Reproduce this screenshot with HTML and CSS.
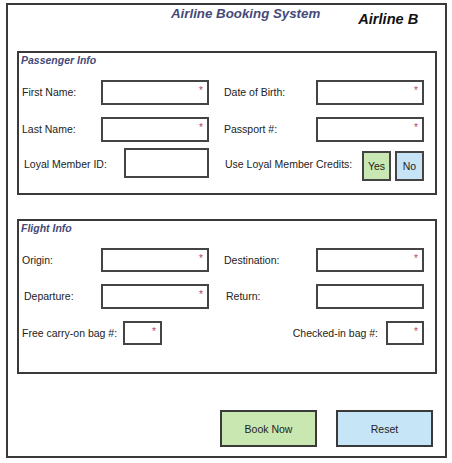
FILE: index.html
```html
<!DOCTYPE html>
<html>
<head>
<meta charset="utf-8">
<link rel="stylesheet" href="styles.css">
</head>
<body>
<div class="frame">
  <div class="header">
    <div class="title">Airline Booking System</div>
    <div class="brand">Airline B</div>
  </div>

  <div class="section passenger">
    <div class="legend">Passenger Info</div>
    <div class="row r1">
      <div class="label lw1">First Name:</div>
      <div class="field wide req"></div>
      <div class="label lw2">Date of Birth:</div>
      <div class="field wide req"></div>
    </div>
    <div class="row r2">
      <div class="label lw1">Last Name:</div>
      <div class="field wide req"></div>
      <div class="label lw2">Passport #:</div>
      <div class="field wide req"></div>
    </div>
    <div class="row r3">
      <div class="label lw3">Loyal Member ID:</div>
      <div class="field mid"></div>
      <div class="label lw4">Use Loyal Member Credits:</div>
      <div class="toggle yes">Yes</div>
      <div class="toggle no">No</div>
    </div>
  </div>

  <div class="section flight">
    <div class="legend">Flight Info</div>
    <div class="row r1 f1">
      <div class="label lw1">Origin:</div>
      <div class="field wide req"></div>
      <div class="label lw2">Destination:</div>
      <div class="field wide req"></div>
    </div>
    <div class="row r2">
      <div class="label lw1 shift">Departure:</div>
      <div class="field wide req"></div>
      <div class="label lw2 shift">Return:</div>
      <div class="field wide"></div>
    </div>
    <div class="row r4">
      <div class="label lw5">Free carry-on bag #:</div>
      <div class="field small req"></div>
      <div class="label right">Checked-in bag #:</div>
      <div class="field small2 req"></div>
    </div>
  </div>

  <div class="actions">
    <div class="btn book">Book Now</div>
    <div class="btn reset">Reset</div>
  </div>
</div>
</body>
</html>
```

FILE: styles.css
```css
html, body {
  margin: 0;
  padding: 0;
  background: #ffffff;
}

body {
  font-family: "Liberation Sans", Arial, sans-serif;
  color: #222222;
}

.frame {
  box-sizing: border-box;
  width: 441px;
  height: 455px;
  margin: 3px 0 0 6px;
  border: 2px solid #3a3a3a;
  display: flex;
  flex-direction: column;
}

.header {
  height: 46px;
  display: flex;
  align-items: flex-start;
}

.title {
  margin-left: 163px;
  margin-top: 1px;
  font-size: 13.3px;
  font-weight: bold;
  font-style: italic;
  color: #454a78;
  line-height: 15px;
}

.brand {
  margin-left: 38px;
  margin-top: 6px;
  font-size: 14.6px;
  font-weight: bold;
  font-style: italic;
  color: #111111;
  line-height: 17px;
}

.section {
  box-sizing: border-box;
  margin-left: 9px;
  width: 420px;
  border: 2px solid #3a3a3a;
}

.passenger {
  height: 144px;
}

.flight {
  height: 155px;
  margin-top: 24px;
}

.legend {
  padding-left: 2px;
  height: 14px;
  line-height: 14px;
  font-size: 10.5px;
  font-weight: bold;
  font-style: italic;
  color: #454a78;
}

.row {
  display: flex;
  align-items: center;
}

.r1 {
  margin-top: 13px;
  height: 25px;
}

.f1 {
  height: 24px;
}

.r2 {
  margin-top: 12px;
  height: 25px;
}

.r3 {
  margin-top: 6px;
  height: 33px;
  align-items: center;
}

.r4 {
  margin-top: 12px;
  height: 24px;
}

.label {
  box-sizing: border-box;
  font-size: 10.5px;
  line-height: 13px;
  color: #222222;
  white-space: nowrap;
}

.lw1 {
  width: 82px;
  padding-left: 3px;
}

.lw2 {
  width: 107px;
  padding-left: 15px;
}

.shift {
  padding-left: 5px;
}

.lw2.shift {
  padding-left: 17px;
}

.lw3 {
  width: 105px;
  padding-left: 5px;
}

.lw4 {
  width: 153px;
  padding-left: 16px;
}

.lw5 {
  width: 104px;
  padding-left: 3px;
}

.right {
  margin-left: auto;
  margin-right: 8px;
}

.field {
  box-sizing: border-box;
  position: relative;
  height: 100%;
  border: 2px solid #444444;
  background: #ffffff;
}

.wide {
  width: 108px;
}

.mid {
  width: 85px;
  height: 30px;
  align-self: flex-start;
}

.small {
  width: 39px;
}

.small2 {
  width: 38px;
  margin-right: 11px;
}

.req::after {
  content: "*";
  position: absolute;
  right: 4px;
  top: 4px;
  font-size: 10px;
  line-height: 10px;
  color: #b8406a;
}

.toggle {
  box-sizing: border-box;
  width: 29px;
  height: 30px;
  align-self: flex-end;
  border: 2px solid #444444;
  display: flex;
  align-items: center;
  justify-content: center;
  font-size: 10.5px;
  color: #222222;
}

.yes {
  background: #c9e7b2;
}

.no {
  background: #c6e4f6;
  margin-left: 4px;
}

.actions {
  display: flex;
  justify-content: flex-end;
  gap: 19px;
  margin-top: 36px;
  margin-right: 12px;
}

.btn {
  box-sizing: border-box;
  width: 97px;
  height: 37px;
  border: 2px solid #3a3a3a;
  display: flex;
  align-items: center;
  justify-content: center;
  font-size: 10.5px;
  color: #222222;
}

.book {
  background: #c9e7b0;
}

.reset {
  background: #c6e5f7;
}
```
